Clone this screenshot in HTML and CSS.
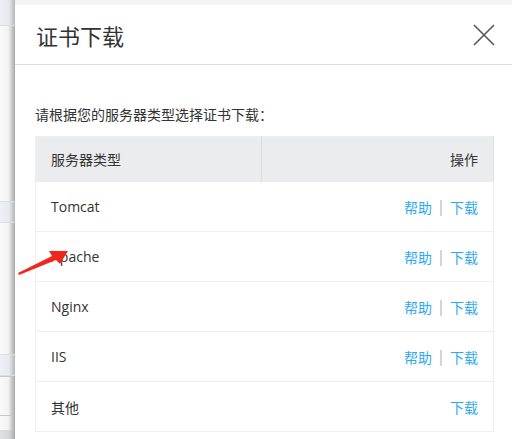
FILE: index.html
```html
<!DOCTYPE html>
<html lang="zh-CN">
<head>
  <meta charset="UTF-8" />
  <title>证书下载</title>
  <link rel="stylesheet" href="styles.css">
</head>
<body>

<div class="page-edge">
  <div class="edge-bar"></div>
  <div class="edge-space" style="height:175px"></div>
  <div class="edge-band"></div>
  <div class="edge-space" style="height:131px"></div>
  <div class="edge-band"></div>
  <div class="edge-box"></div>
  <div class="edge-space" style="height:14px"></div>
  <div class="edge-foot"></div>
</div>

<div class="dialog">
  <div class="dialog-head">
    <h2>证书下载</h2>
    <span class="close">
      <svg width="22" height="22" viewBox="0 0 22 22"><path d="M1 1L21 21M21 1L1 21" stroke="#555" stroke-width="1.6" fill="none"/></svg>
    </span>
  </div>

  <div class="dialog-body">
    <p class="intro">请根据您的服务器类型选择证书下载：</p>
    <table class="cert-table">
      <thead>
        <tr><th>服务器类型</th><th class="ops">操作</th></tr>
      </thead>
      <tbody>
        <tr><td>Tomcat</td><td class="ops"><a>帮助</a><span class="sep"></span><a>下载</a></td></tr>
        <tr><td>Apache</td><td class="ops"><a>帮助</a><span class="sep"></span><a>下载</a></td></tr>
        <tr><td>Nginx</td><td class="ops"><a>帮助</a><span class="sep"></span><a>下载</a></td></tr>
        <tr><td>IIS</td><td class="ops"><a>帮助</a><span class="sep"></span><a>下载</a></td></tr>
        <tr><td>其他</td><td class="ops"><a>下载</a></td></tr>
      </tbody>
    </table>
  </div>
</div>

<svg class="arrow" width="60" height="34" viewBox="0 0 60 34">
  <polygon points="1,26 35,9 32,4 51,4 43,17 39,13 2,28" fill="#f0271b"/>
</svg>

</body>
</html>
```

FILE: styles.css
```css
html, body {
  margin: 0;
  height: 100%;
  overflow: hidden;
}
body {
  display: flex;
  background: #f4f4f4;
  font-family: "Open Sans", "Noto Sans CJK SC", sans-serif;
  color: #333;
  position: relative;
}
.page-edge {
  width: 15px;
  flex: none;
  background: linear-gradient(to right, #f9f9f9 0%, #f3f3f3 55%, #c9c9c9 80%, #a8a8a8 100%);
}
.edge-bar {
  height: 25px;
  background: linear-gradient(to right, #eef0f6 0%, #e8e9ee 60%, #b5b6ba 100%);
  border-bottom: 1px solid #dcdde2;
}
.edge-band {
  height: 20px;
  background: linear-gradient(to right, #eef0f6 0%, #e8e9ee 60%, #b5b6ba 100%);
  border-top: 1px solid #dcdde2;
  border-bottom: 1px solid #dcdde2;
}
.edge-box {
  height: 38px;
  border: 1px solid #c8c8c8;
  border-left: none;
  margin-right: 3px;
}
.edge-foot {
  height: 20px;
  background: linear-gradient(to right, #dfe0e2 0%, #d6d7d9 60%, #a9aaac 100%);
}
.dialog {
  flex: 1;
  margin-top: 5px;
  background: #fff;
}
.dialog-head {
  height: 59px;
  border-bottom: 1px solid #dcdcdc;
  display: flex;
  align-items: center;
  justify-content: space-between;
  padding: 0 17px 0 21px;
}
.dialog-head h2 {
  margin: 0;
  font-size: 22px;
  font-weight: normal;
  color: #333;
}
.close {
  display: flex;
  margin-top: 1px;
}
.dialog-body {
  padding: 40px 18px 0 20px;
}
.intro {
  margin: 0 0 11px;
  font-size: 14px;
  line-height: 20px;
}
.cert-table {
  width: 100%;
  border-collapse: collapse;
  font-size: 14px;
  border: 1px solid #eeeeee;
}
.cert-table th {
  background: #ebeced;
  height: 44px;
  font-weight: normal;
  text-align: left;
  padding: 0 15px;
  border-right: 1px solid #d9d9d9;
}
.cert-table th.ops {
  border-right: 1px solid #e0e0e0;
}
.cert-table td {
  height: 49px;
  padding: 0 15px;
  border-top: 1px solid #eeeeee;
}
.cert-table .ops {
  text-align: right;
  width: 202px;
}
.cert-table th:first-child {
  width: 196px;
}
.ops a {
  color: #2fa8f4;
  cursor: pointer;
}
.sep {
  display: inline-block;
  width: 2px;
  height: 16px;
  background: #d5d5d5;
  margin: 0 8px;
  vertical-align: -3px;
}
.arrow {
  position: absolute;
  left: 17px;
  top: 247px;
}
```
